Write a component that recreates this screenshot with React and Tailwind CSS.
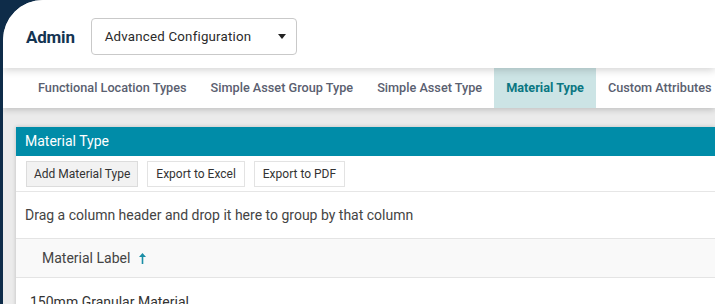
export default function App() {
  const tabs = [
    "Functional Location Types",
    "Simple Asset Group Type",
    "Simple Asset Type",
    "Material Type",
    "Custom Attributes",
  ];
  return (
    <div className="w-[715px] h-[304px] overflow-hidden bg-[#0e2c49] flex" style={{ fontFamily: "Roboto, 'Liberation Sans', sans-serif" }}>
      <div className="ml-[3px] flex-1 min-w-0 bg-[#ebebeb] rounded-tl-[40px] overflow-hidden flex flex-col">
        <div className="relative z-20 h-[68px] bg-white flex items-center pl-[23px] pt-[5px] shadow-[0_2px_8px_rgba(0,0,0,0.18)] shrink-0">
          <span className="text-[17px] font-bold text-[#143452] tracking-[-0.2px] mt-[3px]">Admin</span>
          <div className="ml-[16px] w-[206px] h-[37px] border border-[#c9c9c9] rounded-[4px] flex items-center pl-[13px] pr-[10px] justify-between">
            <span className="text-[13.3px] text-[#2a2a2a] tracking-[0.2px]">Advanced Configuration</span>
            <svg width="8" height="5" viewBox="0 0 8 5"><path d="M0 0h8L4 5z" fill="#222" /></svg>
          </div>
        </div>
        <div className="relative z-10 h-[40px] bg-white flex pl-[23px] shadow-[0_2px_6px_rgba(0,0,0,0.18)] shrink-0 whitespace-nowrap">
          {tabs.map((t) => (
            <div
              key={t}
              className={
                t === "Material Type"
                  ? "px-3 flex items-center bg-[#cce4e5] text-[#0b7782] font-bold text-[12.7px]"
                  : "px-3 flex items-center text-[#5a6070] font-medium text-[12.7px]"
              }
            >
              {t}
            </div>
          ))}
        </div>
        <div className="flex-1 pt-[19px] pl-[13px]">
          <div className="bg-white shadow-[0_0_4px_rgba(0,0,0,0.2)] h-[200px]">
            <div className="h-[29px] bg-[#008ca8] flex items-center pl-[9px] text-white text-[14px]">Material Type</div>
            <div className="h-[36px] border-b border-[#e6e6e6] flex items-center pl-[10px] gap-[9px]">
              <div className="h-[26px] px-[7px] flex items-center border border-[#dcdcdc] bg-[#f2f2f2] text-[12px] text-[#333]">Add Material Type</div>
              <div className="h-[26px] px-[8px] flex items-center border border-[#e3e3e3] bg-white text-[12px] text-[#333]">Export to Excel</div>
              <div className="h-[26px] px-[8px] flex items-center border border-[#e3e3e3] bg-white text-[12px] text-[#333]">Export to PDF</div>
            </div>
            <div className="h-[46px] flex items-center pl-[9px] text-[14px] text-[#444]">Drag a column header and drop it here to group by that column</div>
            <div className="h-[40px] bg-[#f9f9f9] border-y border-[#e4e4e4] flex items-center pl-[26px] text-[14px] text-[#444]">
              Material Label
              <svg className="ml-[9px]" width="7" height="11" viewBox="0 0 7 11"><path d="M3.5 0L7 4H4.3v7H2.7V4H0z" fill="#1a8ea6" /></svg>
            </div>
            <div className="h-[40px] flex items-center pl-[14px] text-[14px] text-[#333] pt-[8px]">150mm Granular Material</div>
          </div>
        </div>
      </div>
    </div>
  );
}
